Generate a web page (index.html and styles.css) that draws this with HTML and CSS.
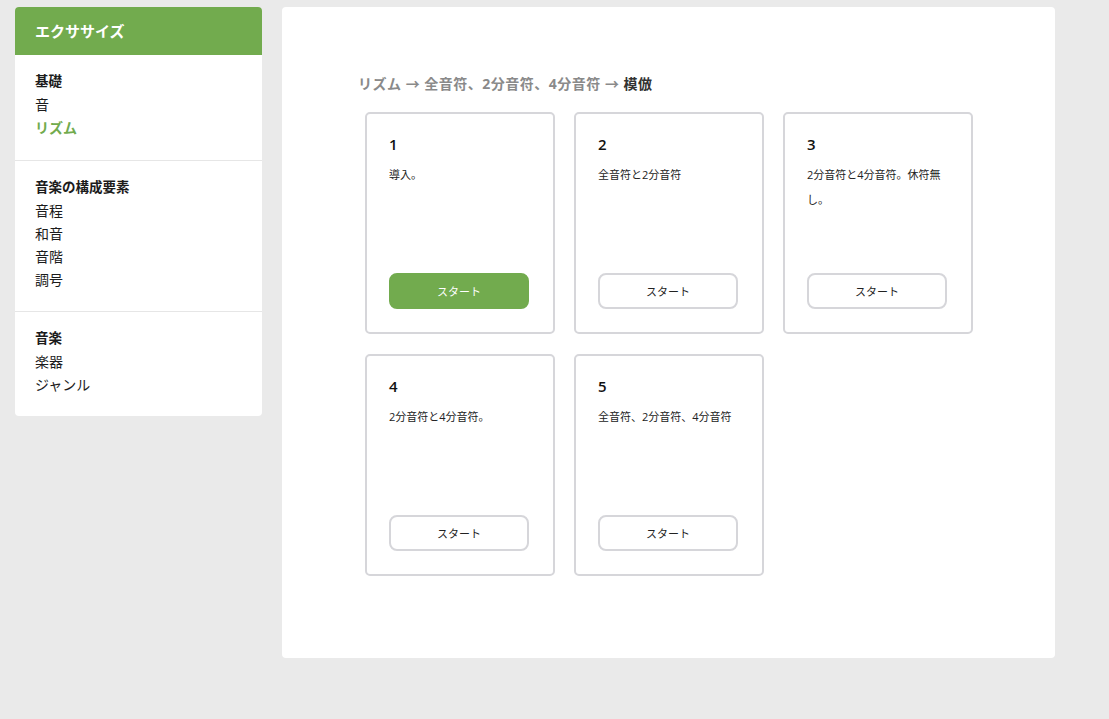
FILE: index.html
```html
<!DOCTYPE html>
<html lang="ja">
<head>
    <meta charset="UTF-8">
    <meta name="viewport" content="width=device-width, initial-scale=1.0">
    <title>エクササイズ</title>
    <link rel="stylesheet" href="styles.css">
</head>
<body>

<div class="layout">
    <aside class="sidebar">
        <div class="sidebar-header">エクササイズ</div>
        <div class="sidebar-section">
            <div class="section-title">基礎</div>
            <a class="nav-link" href="#">音</a>
            <a class="nav-link active" href="#">リズム</a>
        </div>
        <div class="sidebar-section">
            <div class="section-title">音楽の構成要素</div>
            <a class="nav-link" href="#">音程</a>
            <a class="nav-link" href="#">和音</a>
            <a class="nav-link" href="#">音階</a>
            <a class="nav-link" href="#">調号</a>
        </div>
        <div class="sidebar-section">
            <div class="section-title">音楽</div>
            <a class="nav-link" href="#">楽器</a>
            <a class="nav-link" href="#">ジャンル</a>
        </div>
    </aside>

    <main class="panel">
        <div class="breadcrumb">
            <span class="crumb">リズム</span> → <span class="crumb">全音符、2分音符、4分音符</span> → <span class="crumb current">模倣</span>
        </div>
        <div class="cards">
            <div class="card">
                <div class="card-num">1</div>
                <div class="card-desc">導入。</div>
                <button class="start primary">スタート</button>
            </div>
            <div class="card">
                <div class="card-num">2</div>
                <div class="card-desc">全音符と2分音符</div>
                <button class="start">スタート</button>
            </div>
            <div class="card">
                <div class="card-num">3</div>
                <div class="card-desc">2分音符と4分音符。休符無し。</div>
                <button class="start">スタート</button>
            </div>
            <div class="card">
                <div class="card-num">4</div>
                <div class="card-desc">2分音符と4分音符。</div>
                <button class="start">スタート</button>
            </div>
            <div class="card">
                <div class="card-num">5</div>
                <div class="card-desc">全音符、2分音符、4分音符</div>
                <button class="start">スタート</button>
            </div>
        </div>
    </main>
</div>

</body>
</html>
```

FILE: styles.css
```css
body {
    margin: 0;
    background-color: #eaeaea;
    font-family: "Open Sans", "Noto Sans CJK JP", sans-serif;
    color: #222;
}
.layout {
    display: flex;
    align-items: flex-start;
    gap: 20px;
    padding: 7px 15px;
}
.sidebar {
    width: 247px;
    flex-shrink: 0;
    background-color: #fff;
    border-radius: 4px;
    overflow: hidden;
}
.sidebar-header {
    height: 48px;
    line-height: 48px;
    padding-left: 20px;
    background-color: #72ab4e;
    color: #fff;
    font-size: 15px;
    font-weight: 700;
}
.sidebar-section {
    display: flex;
    flex-direction: column;
    padding: 15px 20px 20px;
    border-top: 1px solid #e6e6e6;
}
.sidebar-header + .sidebar-section {
    border-top: none;
    padding-bottom: 21px;
}
.section-title {
    font-size: 13.5px;
    line-height: 23px;
    font-weight: 700;
    color: #1c1c1c;
}
.nav-link {
    font-size: 14px;
    line-height: 23px;
    color: #1c1c1c;
    text-decoration: none;
}
.nav-link.active {
    color: #72ab4e;
    font-weight: 700;
}
.panel {
    width: 773px;
    height: 651px;
    box-sizing: border-box;
    background-color: #fff;
    border-radius: 4px;
    padding: 66px 76px 0;
}
.breadcrumb {
    font-size: 14px;
    line-height: 22px;
    font-weight: 700;
    letter-spacing: 0.5px;
    color: #8a8a8a;
}
.breadcrumb .current {
    color: #333;
}
.cards {
    display: flex;
    flex-wrap: wrap;
    gap: 20px 19px;
    width: 608px;
    margin: 17px 0 0 7px;
}
.card {
    display: flex;
    flex-direction: column;
    width: 190px;
    height: 222px;
    box-sizing: border-box;
    padding: 20px 22px 23px;
    border: 2px solid #d6d6da;
    border-radius: 5px;
}
.card-num {
    font-size: 15px;
    line-height: 20px;
    font-weight: 600;
    color: #111;
}
.card-desc {
    margin-top: 8px;
    font-size: 11px;
    line-height: 25px;
    color: #222;
}
.start {
    margin-top: auto;
    width: 140px;
    height: 36px;
    background-color: #fff;
    border: 2px solid #d6d6da;
    border-radius: 8px;
    font-family: inherit;
    font-size: 11px;
    color: #222;
    cursor: pointer;
}
.start.primary {
    background-color: #72ab4e;
    border-color: #72ab4e;
    color: #fff;
}
```
